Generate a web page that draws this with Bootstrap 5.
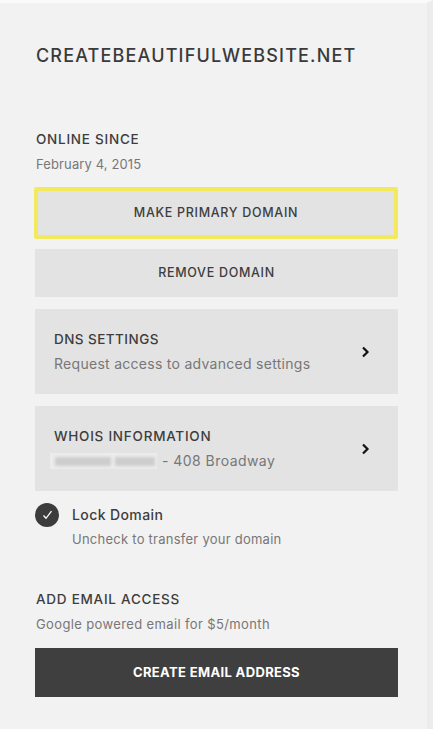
<!DOCTYPE html>
<html lang="en">
<head>
<meta charset="utf-8">
<title>Domain</title>
<link href="https://cdn.jsdelivr.net/npm/bootstrap@5.3.0/dist/css/bootstrap.min.css" rel="stylesheet">
<style>
html,body{height:100%;}
body{background:#fff;font-family:Inter,"Liberation Sans",sans-serif;color:#3d3d3d;overflow:hidden;}
.pane{height:729px;padding-top:3px;background:#f2f2f2;border-right:6px solid #ececec;border-top:3px solid #fafafa;}
.inner{padding:0 29px 0 35px;}
.site-title{font-size:18px;font-weight:500;letter-spacing:1.17px;line-height:22px;margin:39px 0 0 1px;color:#3a3a3a;}
.label-caps{font-size:13.5px;font-weight:500;letter-spacing:.75px;line-height:18px;margin:0 0 0 1px;color:#3d3d3d;}
.note{font-size:13px;line-height:18px;margin:0 0 0 1px;color:#777;letter-spacing:.12px;}
.sec-online{margin-top:63px;}
.sec-online .note{margin-top:7px;}
.act{display:block;width:100%;border:0;border-radius:0;background:#e3e3e3;color:#3d3d3d;font-size:12.5px;font-weight:500;letter-spacing:.7px;text-align:center;height:48px;padding:0;}
.act:hover{background:#e3e3e3;color:#3d3d3d;}
.act-focus{height:52px;margin-top:14px;margin-left:-1px;width:calc(100% + 1px);border:4px solid #f3e95c;border-radius:2px;}
.act-second{margin-top:10px;}
.rowlink{background:#e3e3e3;height:85px;margin-top:12px;padding:0 28px 0 18px;}
.rowlink .note{font-size:14px;margin-top:7px;letter-spacing:.28px;}
.rowlink .whois-note{letter-spacing:.45px;}
.tight{letter-spacing:.45px;}
.masked{width:107px;height:16px;margin-left:-4px;margin-right:5px;background:#ececec;padding:4px 2px 3px 5px;}
.masked i{display:block;height:9px;background:#cdcdcd;filter:blur(1.5px);}
.masked .short{width:40px;flex:none;}
.lockwrap{margin-top:12px;}
.tick{width:24px;height:24px;background:#3c3c3c;flex:none;}
.lock-name{font-size:14px;font-weight:500;line-height:24px;letter-spacing:.4px;margin-left:1px;}
.lock-text{margin-left:12px;}
.lock-note{margin-top:3px;letter-spacing:.25px;}
.sec-mail{margin-top:42px;}
.sec-mail .note{margin-top:7px;letter-spacing:.37px;}
.act-dark{background:#3f3f3f;color:#fff;height:49px;margin-top:15px;font-weight:700;font-size:13px;letter-spacing:.35px;}
.act-dark:hover{background:#3f3f3f;color:#fff;}
</style>
</head>
<body>
<main class="pane">
<div class="inner">
  <h1 class="site-title">CREATEBEAUTIFULWEBSITE.NET</h1>
  <section class="sec-online">
    <h2 class="label-caps">ONLINE SINCE</h2>
    <p class="note">February 4, 2015</p>
  </section>
  <button type="button" class="btn act act-focus">MAKE PRIMARY DOMAIN</button>
  <button type="button" class="btn act act-second">REMOVE DOMAIN</button>
  <a class="rowlink d-flex align-items-center justify-content-between text-decoration-none" href="#">
    <span class="d-block">
      <span class="label-caps tight d-block">DNS SETTINGS</span>
      <span class="note d-block">Request access to advanced settings</span>
    </span>
    <svg width="9" height="12" viewBox="0 0 9 12" aria-hidden="true"><path d="M2 1.5 6.5 6 2 10.5" fill="none" stroke="#111" stroke-width="2.2"/></svg>
  </a>
  <a class="rowlink d-flex align-items-center justify-content-between text-decoration-none" href="#">
    <span class="d-block">
      <span class="label-caps d-block">WHOIS INFORMATION</span>
      <span class="note whois-note d-flex align-items-center"><span class="masked d-flex gap-1"><i class="flex-grow-1"></i><i class="short"></i></span>- 408 Broadway</span>
    </span>
    <svg width="9" height="12" viewBox="0 0 9 12" aria-hidden="true"><path d="M2 1.5 6.5 6 2 10.5" fill="none" stroke="#111" stroke-width="2.2"/></svg>
  </a>
  <div class="d-flex lockwrap">
    <span class="tick rounded-circle d-flex align-items-center justify-content-center">
      <svg width="11" height="10" viewBox="0 0 11 10" aria-hidden="true"><path d="M1.5 5.5 4 8.3 9.5 1.2" fill="none" stroke="#fff" stroke-width="1.3"/></svg>
    </span>
    <div class="lock-text">
      <div class="lock-name">Lock Domain</div>
      <p class="note lock-note">Uncheck to transfer your domain</p>
    </div>
  </div>
  <section class="sec-mail">
    <h2 class="label-caps">ADD EMAIL ACCESS</h2>
    <p class="note">Google powered email for $5/month</p>
  </section>
  <button type="button" class="btn act act-dark">CREATE EMAIL ADDRESS</button>
</div>
</main>
<script src="https://cdn.jsdelivr.net/npm/bootstrap@5.3.0/dist/js/bootstrap.bundle.min.js"></script>
</body>
</html>
